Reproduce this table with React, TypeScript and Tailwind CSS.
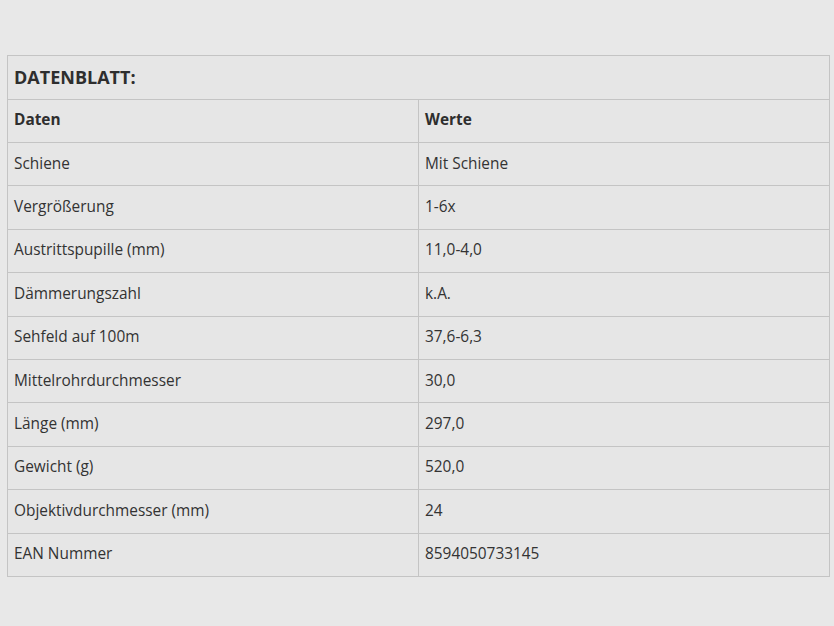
const rows: [string, string][] = [
  ["Schiene", "Mit Schiene"],
  ["Vergrößerung", "1-6x"],
  ["Austrittspupille (mm)", "11,0-4,0"],
  ["Dämmerungszahl", "k.A."],
  ["Sehfeld auf 100m", "37,6-6,3"],
  ["Mittelrohrdurchmesser", "30,0"],
  ["Länge (mm)", "297,0"],
  ["Gewicht (g)", "520,0"],
  ["Objektivdurchmesser (mm)", "24"],
  ["EAN Nummer", "8594050733145"],
];

export default function App() {
  return (
    <div
      className="h-[626px] w-full bg-[#e8e8e8] pt-[55px] pl-[7px] pr-[4px] text-[#333]"
      style={{ fontFamily: '"Open Sans", sans-serif' }}
    >
      <table className="w-full border-collapse border border-[#c4c4c4] bg-[#e6e6e6] text-[15.4px]">
        <thead>
          <tr className="h-[44px]">
            <th colSpan={2} className="border border-[#c4c4c4] px-[6px] pb-[1px] text-left text-[18px] font-bold text-[#2e2e2e]">
              DATENBLATT:
            </th>
          </tr>
          <tr className="h-[43px]">
            <th className="w-1/2 border border-[#c4c4c4] px-[6px] pb-[2px] text-left font-bold text-[#2e2e2e]">Daten</th>
            <th className="border border-[#c4c4c4] px-[6px] pb-[2px] text-left font-bold text-[#2e2e2e]">Werte</th>
          </tr>
        </thead>
        <tbody>
          {rows.map(([k, v]) => (
            <tr key={k} className="h-[43.4px]">
              <td className="border border-[#c4c4c4] px-[6px] pb-[2px]">{k}</td>
              <td className="border border-[#c4c4c4] px-[6px] pb-[2px]">{v}</td>
            </tr>
          ))}
        </tbody>
      </table>
    </div>
  );
}
